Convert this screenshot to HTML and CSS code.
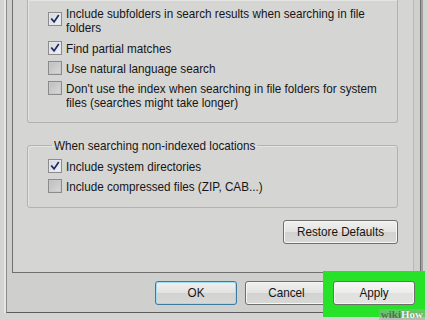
FILE: index.html
```html
<!DOCTYPE html>
<html lang="en">
<head>
    <meta charset="UTF-8">
    <meta name="viewport" content="width=device-width, initial-scale=1.0">
    <title>Folder Options - Search</title>
    <link rel="stylesheet" href="styles.css">
</head>
<body>
    <div class="screen">
        <div class="dialog">
            <div class="panel">
                <!-- How to search (top of group is scrolled off) -->
                <div class="group group-top">
                    <label class="opt opt-two">
                        <span class="box box-low checked">
                            <svg viewBox="0 0 14 14"><path d="M3.2 7.2 L5.9 10.4 L10.8 3.2"/></svg>
                        </span>
                        <span class="txt">Include subfolders in search results when searching in file<br>folders</span>
                    </label>
                    <label class="opt">
                        <span class="box checked">
                            <svg viewBox="0 0 14 14"><path d="M3.2 7.2 L5.9 10.4 L10.8 3.2"/></svg>
                        </span>
                        <span class="txt">Find partial matches</span>
                    </label>
                    <label class="opt">
                        <span class="box"></span>
                        <span class="txt">Use natural language search</span>
                    </label>
                    <label class="opt">
                        <span class="box"></span>
                        <span class="txt">Don't use the index when searching in file folders for system<br>files (searches might take longer)</span>
                    </label>
                </div>

                <fieldset class="group">
                    <legend><span class="txt">When searching non-indexed locations</span></legend>
                    <label class="opt">
                        <span class="box checked">
                            <svg viewBox="0 0 14 14"><path d="M3.2 7.2 L5.9 10.4 L10.8 3.2"/></svg>
                        </span>
                        <span class="txt">Include system directories</span>
                    </label>
                    <label class="opt">
                        <span class="box"></span>
                        <span class="txt">Include compressed files (ZIP, CAB...)</span>
                    </label>
                </fieldset>

                <div class="panel-foot">
                    <button class="btn btn-restore"><span class="txt">Restore Defaults</span></button>
                </div>
            </div>

            <div class="actions">
                <button class="btn btn-default"><span class="txt">OK</span></button>
                <button class="btn btn-cancel"><span class="txt">Cancel</span></button>
                <span class="mark">
                    <button class="btn btn-apply"><span class="txt">Apply</span></button>
                </span>
            </div>
        </div>

        <div class="wm"><span class="wm-wiki">wiki</span><span class="wm-how">How</span></div>
    </div>
</body>
</html>
```

FILE: styles.css
```css
body {
    margin: 0;
    background: #d3d3d1;
    font-family: 'Liberation Sans', Arial, sans-serif;
    color: #161616;
    overflow: hidden;
}
.screen {
    position: relative;
    width: 428px;
    height: 320px;
    overflow: hidden;
    background: #d4d4d2;
}

/* text is tall and narrow in the shot, so stretch it a little vertically */
.txt {
    display: block;
    font-size: 11.7px;
    line-height: 13.2px;
    white-space: nowrap;
    transform: scaleY(1.1);
    transform-origin: 0 0;
}

.dialog {
    box-sizing: border-box;
    width: 415px;
    height: 313px;
    margin-left: 6px;
    padding: 0 6px 0 5px;
    background: #cfcfcd;
    border-left: 1px solid #8c8c8c;
    border-right: 1px solid #707070;
    border-bottom: 1px solid #5c5c5c;
    box-shadow: -2px 0 0 #e6e6e4, 2px 0 0 #a0a09e;
}
.panel {
    box-sizing: border-box;
    height: 273px;
    padding: 0 15px 0 14px;
    background: #d5d5d3;
    border: 1px solid #6f6f6f;
    border-top: none;
    border-right-color: #b9b9b7;
}

.group {
    border: 1px solid #b2b2b0;
    border-radius: 3px;
    box-shadow: inset 1px 1px 0 #e4e4e2;
}
.group-top {
    box-sizing: border-box;
    height: 123px;
    padding: 6px 0 0 20px;
    border-top: none;
    border-radius: 0 0 3px 3px;
}
fieldset.group {
    margin: 15.5px 0 0;
    padding: 7px 0 14px 20px;
    min-inline-size: 0;
}
fieldset.group legend {
    margin-left: 4px;
    padding: 0 2px;
}
fieldset.group legend .txt {
    transform-origin: 50% 50%;
}

.opt {
    display: flex;
    align-items: flex-start;
    min-height: 14px;
}
.opt + .opt {
    margin-top: 6px;
}
.opt-two {
    height: 35px;
}
.opt-two + .opt {
    margin-top: 0;
}

.box {
    flex: none;
    box-sizing: border-box;
    width: 14px;
    height: 14px;
    margin-right: 4px;
    border: 1px solid #8a8b8c;
    background: linear-gradient(135deg, #bdbdbd, #d9d9d9);
    box-shadow: inset 0 0 0 1px #c9c9c9;
}
.box.checked {
    background: linear-gradient(135deg, #d4d6da, #f2f3f5);
    box-shadow: inset 0 0 0 1px #e6e7ea;
}
.box-low {
    margin-top: 6px;
}
.box svg {
    display: block;
    width: 12px;
    height: 12px;
}
.box svg path {
    fill: none;
    stroke: #1d2a66;
    stroke-width: 2;
    stroke-linecap: square;
}

.panel-foot {
    display: flex;
    justify-content: flex-end;
    margin-top: 12px;
}

.btn {
    box-sizing: border-box;
    height: 24px;
    width: 82px;
    padding: 0;
    font-family: inherit;
    color: #141414;
    border: 1px solid #6e6e6e;
    border-radius: 3px;
    background: linear-gradient(#f0f0ef, #e3e3e2 48%, #d2d2d0 52%, #d8d8d6);
    box-shadow: inset 0 0 0 1px #f6f6f5;
}
.btn .txt {
    transform-origin: 50% 50%;
    margin-top: -1px;
}
.btn-restore {
    width: 115px;
}
.btn-default {
    border-color: #3d7aa0;
    box-shadow: inset 0 0 0 1px #9fdcf2;
    margin-right: 8px;
}
.btn-cancel {
    width: 83px;
    margin-right: 5px;
}
.btn-apply {
    background: linear-gradient(#f7f7f6, #ececeb 48%, #e0e0df 52%, #e4e4e3);
}

.actions {
    display: flex;
    justify-content: flex-end;
    align-items: flex-start;
    margin-top: 8px;
    margin-right: -1px;
}
/* green highlight round the Apply button */
.mark {
    display: block;
    margin: -10px -10px -12px -10px;
    padding: 10px 10px 12px 10px;
    background: #28e229;
}

.wm {
    position: absolute;
    right: 3px;
    bottom: 0;
    padding: 0 2px;
    font-family: 'Liberation Serif', serif;
    font-weight: bold;
    font-size: 11px;
    line-height: 11px;
    background: rgba(150, 175, 150, 0.55);
}
.wm-wiki {
    color: #5d6a5d;
}
.wm-how {
    color: #f4f7f4;
    text-shadow: 0 0 1px #6a6a6a;
}
```
